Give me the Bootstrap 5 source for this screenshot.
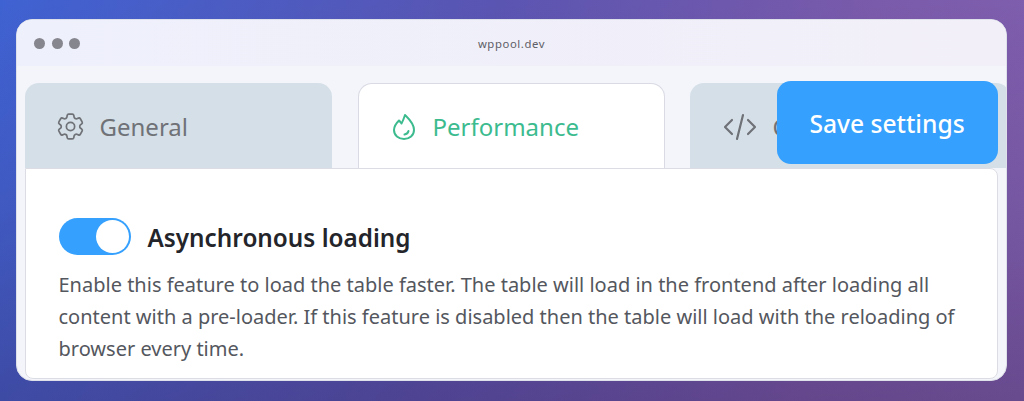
<!DOCTYPE html>
<html lang="en">
<head>
    <meta charset="UTF-8">
    <title>wppool.dev</title>
    <link href="https://cdn.jsdelivr.net/npm/bootstrap@5.3.3/dist/css/bootstrap.min.css" rel="stylesheet">
    <style>
        html, body { height: 401px; overflow: hidden; }
        body { background: linear-gradient(to bottom, rgba(50,25,70,0) 0%, rgba(50,25,70,.1) 50%, rgba(50,25,70,.3) 100%), linear-gradient(100deg, #3f62d2 0%, #5a55b2 45%, #7a5aaa 80%, #7f5fae 100%); padding: 19px 17px 20px 16px; font-family: "Noto Sans", sans-serif; }
        .win { height: 362px; background: #f3f5fb; border: 1.5px solid #dfe1ea; border-radius: 16px; overflow: hidden; position: relative; }
        .win-bar { height: 46px; background: linear-gradient(90deg, #eef0fb, #f2eff8); padding-left: 17px; }
        .win-dots { gap: 6.5px; }
        .win-dot { width: 11px; height: 11px; background: #86868f; border-radius: 50%; }
        .win-url { font-size: 11.3px; color: #5e5e66; letter-spacing: .6px; left: 0; top: 16px; }
        .tab-row { padding: 17px 0 0 7.5px; gap: 26px; height: 102px; }
        .tab-item { width: 307px; height: 85px; border-radius: 14px 14px 0 0; background: #d5dfe7; color: #6f7277; font-size: 24px; padding: 2px 0 0 29.5px; gap: 12.5px; }
        .tab-item svg { flex: none; }
        .tab-on { background: #fff; color: #3cbb8f; border: 1.5px solid #d9dae3; border-bottom: 0; padding: 0 0 0 33px; gap: 17px; position: relative; z-index: 1; height: 87px; }
        .tab-last { width: 320px; margin-left: -1px; padding-left: 33px; gap: 16px; }
        .save-btn { top: 60.5px; left: 759.5px; width: 221px; height: 83px; background: #35a0fd; color: #fff; font-size: 24.6px; font-weight: 500; padding: 4px 0 0; border-radius: 14px; border: 0; z-index: 2; }
        .save-btn:hover { background: #35a0fd; color: #fff; }
        .panel { margin: 0 8px 0 7.5px; height: 211px; background: #fff; border: 1px solid #dcdde4; border-radius: 0 8px 8px 8px; padding: 49px 20px 0 33px; }
        .switch-row { gap: 17px; }
        .switch-track { width: 72px; height: 37px; background: #35a0fd; border-radius: 19px; padding: 2px; }
        .switch-knob { width: 33px; height: 33px; background: #fff; border-radius: 50%; }
        .opt-title { font-size: 24.3px; font-weight: 600; color: #23252a; margin: 2px 0 0; }
        .opt-text { font-size: 20px; line-height: 32px; color: #54575e; margin: 14px 0 0; }
    </style>
</head>
<body>
<div class="win">
    <div class="win-bar d-flex align-items-center position-relative">
        <div class="win-dots d-flex">
            <span class="win-dot"></span><span class="win-dot"></span><span class="win-dot"></span>
        </div>
        <div class="win-url position-absolute w-100 text-center">wppool.dev</div>
    </div>

    <div class="tab-row d-flex overflow-hidden">
        <div class="tab-item d-flex align-items-center flex-shrink-0">
            <svg width="33" height="33" viewBox="0 0 24 24" fill="none" stroke="#6f7277" stroke-width="1.25" stroke-linecap="round" stroke-linejoin="round"><path d="M9.594 3.94c.09-.542.56-.94 1.11-.94h2.593c.55 0 1.02.398 1.11.94l.213 1.281c.063.374.313.686.645.87.074.04.147.083.22.127.325.196.72.257 1.075.124l1.217-.456a1.125 1.125 0 011.37.49l1.296 2.247a1.125 1.125 0 01-.26 1.431l-1.003.827c-.293.24-.438.613-.431.992a6.759 6.759 0 010 .255c-.007.378.138.75.43.99l1.005.828c.424.35.534.954.26 1.43l-1.298 2.247a1.125 1.125 0 01-1.369.491l-1.217-.456c-.355-.133-.75-.072-1.076.124a6.57 6.57 0 01-.22.128c-.331.183-.581.495-.644.869l-.213 1.28c-.09.543-.56.941-1.11.941h-2.594c-.55 0-1.02-.398-1.11-.94l-.213-1.281c-.062-.374-.312-.686-.644-.87a6.52 6.52 0 01-.22-.127c-.325-.196-.72-.257-1.076-.124l-1.217.456a1.125 1.125 0 01-1.369-.49l-1.297-2.247a1.125 1.125 0 01.26-1.431l1.004-.827c.292-.24.437-.613.43-.992a6.932 6.932 0 010-.255c.007-.378-.138-.75-.43-.99l-1.004-.828a1.125 1.125 0 01-.26-1.43l1.297-2.247a1.125 1.125 0 011.37-.491l1.216.456c.356.133.751.072 1.076-.124.072-.044.146-.087.22-.128.332-.183.582-.495.644-.869l.214-1.281z"/><circle cx="12" cy="12" r="3"/></svg>
            <span>General</span>
        </div>
        <div class="tab-item tab-on d-flex align-items-center flex-shrink-0">
            <svg width="24" height="28" viewBox="0 0 24 28" fill="none" stroke="#3cbb8f" stroke-width="2" stroke-linecap="round" stroke-linejoin="round"><path d="M7 7.5C8.5 9 9 10 9.5 10.5C11 8 12 5 13 2C16 5 22 10 22 17C22 22.5 17.5 26 12 26C6.5 26 2 22.5 2 17C2 13 4.5 10 7 7.5Z"/><path d="M12.5 21.5C14.5 21.2 16 20 16.5 18"/></svg>
            <span>Performance</span>
        </div>
        <div class="tab-item tab-last d-flex align-items-center flex-shrink-0">
            <svg width="34" height="28" viewBox="0 0 34 28" fill="none" stroke="#6f7277" stroke-width="2.2" stroke-linecap="round" stroke-linejoin="round"><path d="M9 7 2 14l7 7M25 7l7 7-7 7M20 2l-6 24"/></svg>
            <span>Custom</span>
        </div>
    </div>

    <button type="button" class="btn save-btn position-absolute">Save settings</button>

    <div class="panel">
        <div class="switch-row d-flex align-items-center">
            <div class="switch-track d-flex justify-content-end"><span class="switch-knob"></span></div>
            <h2 class="opt-title">Asynchronous loading</h2>
        </div>
        <p class="opt-text">Enable this feature to load the table faster. The table will load in the frontend after loading all content with a pre-loader. If this feature is disabled then the table will load with the reloading of browser every time.</p>
    </div>
</div>
<script src="https://cdn.jsdelivr.net/npm/bootstrap@5.3.3/dist/js/bootstrap.bundle.min.js"></script>
</body>
</html>
